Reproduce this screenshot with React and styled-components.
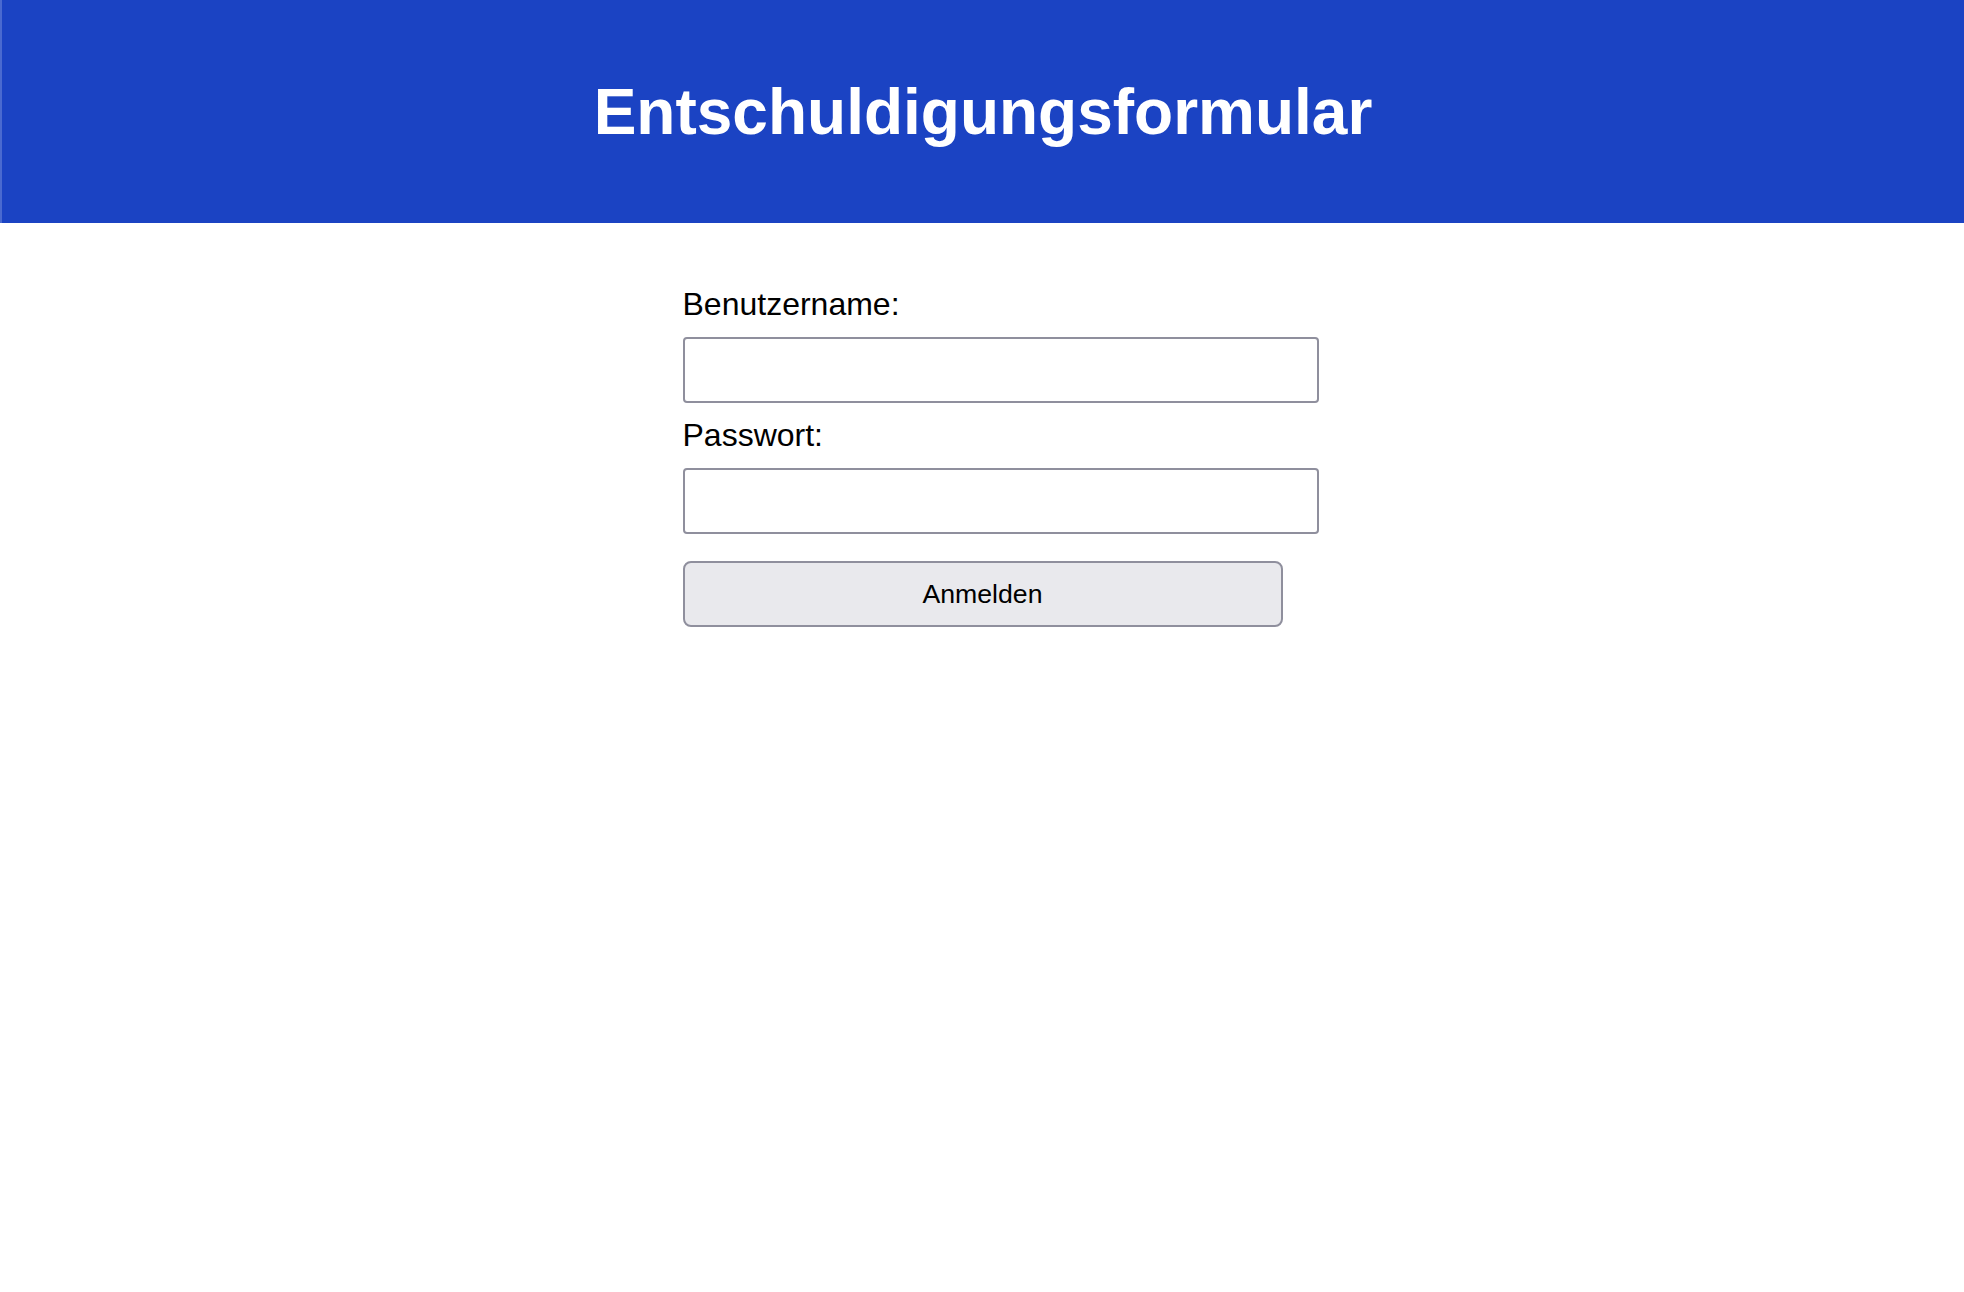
import styled, { createGlobalStyle } from "styled-components";

const GlobalStyle = createGlobalStyle`
  body {
    margin: 0;
    background: #fff;
    font-family: "Liberation Sans", Arial, sans-serif;
  }
`;

const Header = styled.header`
  background-color: #1b43c3;
  border-left: 2px solid #4a6ad0;
  padding: 32px 0;
  text-align: center;
`;

const Title = styled.h1`
  margin: 43px 0 42px;
  color: #fff;
  font-size: 64px;
  font-weight: bold;
`;

const Form = styled.form`
  width: 600px;
  margin: 63px auto 0;
  padding-left: 1px;
`;

const Label = styled.label`
  display: block;
  font-size: 32px;
  color: #000;
  margin-bottom: 14px;
`;

const Input = styled.input`
  display: block;
  box-sizing: border-box;
  width: 636px;
  height: 66px;
  margin: 0 0 14px;
  padding: 0 16px;
  border: 2px solid #8f8f9d;
  border-radius: 4px;
  background: #fff;
  font-size: 27px;
  font-family: inherit;
`;

const Button = styled.button`
  display: block;
  box-sizing: border-box;
  width: 600px;
  height: 66px;
  margin-top: 27px;
  border: 2px solid #8f8f9d;
  border-radius: 8px;
  background: #e9e9ed;
  color: #000;
  font-size: 26.67px;
  font-family: inherit;
`;

export default function App() {
  return (
    <>
      <GlobalStyle />
      <Header>
        <Title>Entschuldigungsformular</Title>
      </Header>
      <Form onSubmit={(e) => e.preventDefault()}>
        <Label htmlFor="username">Benutzername:</Label>
        <Input id="username" type="text" />
        <Label htmlFor="password">Passwort:</Label>
        <Input id="password" type="password" />
        <Button type="submit">Anmelden</Button>
      </Form>
    </>
  );
}
